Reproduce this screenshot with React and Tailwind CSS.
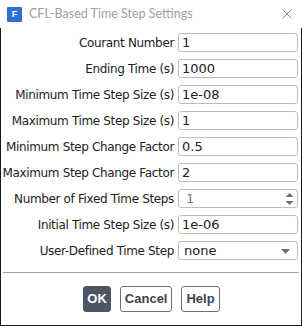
import { useState } from 'react'

const rows = [
  { label: 'Courant Number', value: '1' },
  { label: 'Ending Time (s)', value: '1000' },
  { label: 'Minimum Time Step Size (s)', value: '1e-08' },
  { label: 'Maximum Time Step Size (s)', value: '1' },
  { label: 'Minimum Step Change Factor', value: '0.5' },
  { label: 'Maximum Step Change Factor', value: '2' },
  { label: 'Number of Fixed Time Steps', value: '1', kind: 'spin' },
  { label: 'Initial Time Step Size (s)', value: '1e-06' },
  { label: 'User-Defined Time Step', value: 'none', kind: 'select' },
]

// Small blue app badge in the title bar.
function AppIcon() {
  return (
    <div className="w-[15px] h-[15px] bg-[#2f6fd6] rounded-[1px] flex items-center justify-center">
      <span className="text-white text-[9px] font-bold leading-none font-['Liberation_Sans',sans-serif]">F</span>
    </div>
  )
}

function Field({ row }) {
  const box = 'h-[19px] w-[120px] rounded-[3px] border border-[#b9bec6] bg-white flex items-center pl-[3px] text-[13px]'
  if (row.kind === 'spin') {
    return (
      <div className={box + ' relative text-[#777]'}>
        <span className="pl-[4px]">{row.value}</span>
        <svg className="absolute right-[3px] top-[2px]" width="9" height="14" viewBox="0 0 9 14">
          <path d="M0.5 5 L4.5 1 L8.5 5 Z" fill="#6b6f75" />
          <path d="M0.5 9 L4.5 13 L8.5 9 Z" fill="#6b6f75" />
        </svg>
      </div>
    )
  }
  if (row.kind === 'select') {
    return (
      <div className={box + ' relative text-[#222]'}>
        <span className="pl-[2px]">{row.value}</span>
        <svg className="absolute right-[7px] top-[7px]" width="9" height="5" viewBox="0 0 9 5">
          <path d="M0 0 L9 0 L4.5 5 Z" fill="#6b6f75" />
        </svg>
      </div>
    )
  }
  return <div className={box + ' text-[#222]'}>{row.value}</div>
}

export default function App() {
  const [rowsState] = useState(rows)
  const btn = "h-[26px] rounded-[3px] text-[13px] font-bold font-['Liberation_Sans',sans-serif] border"
  return (
    <div className="w-[302px] h-[326px] bg-white font-['DejaVu_Sans',sans-serif] flex flex-col">
      <div className="h-[28px] flex items-center pl-[7px] pr-[10px] shrink-0">
        <AppIcon />
        <span className="ml-[7px] text-[12.5px] text-[#a0a0a0] font-['Lato',sans-serif]">CFL-Based Time Step Settings</span>
        <svg className="ml-auto" width="10" height="10" viewBox="0 0 10 10">
          <path d="M0.5 0.5 L9.5 9.5 M9.5 0.5 L0.5 9.5" stroke="#8f8f8f" strokeWidth="1" />
        </svg>
      </div>
      <div className="flex-1 border-x border-b border-[#1a1a1a] flex flex-col">
        <div className="flex flex-col gap-[7px] pt-[5px] pr-[3px]">
          {rowsState.map((r) => (
            <div key={r.label} className="flex items-center justify-end gap-[4px]">
              <span className="text-[12px] text-[#222] tracking-[-0.35px] whitespace-nowrap">{r.label}</span>
              <Field row={r} />
            </div>
          ))}
        </div>
        <div className="mt-[12px] mx-[2px] h-px bg-[#a3a3a3]" />
        <div className="flex justify-center gap-[9px] pt-[13px] pl-[1px]">
          <button className={btn + ' px-[3px] bg-[#4b5563] text-white border-[#4b5563]'}>OK</button>
          <button className={btn + ' px-[4px] bg-white text-[#3c4450] border-[#6b7280]'}>Cancel</button>
          <button className={btn + ' px-[4px] bg-white text-[#3c4450] border-[#6b7280]'}>Help</button>
        </div>
      </div>
    </div>
  )
}
